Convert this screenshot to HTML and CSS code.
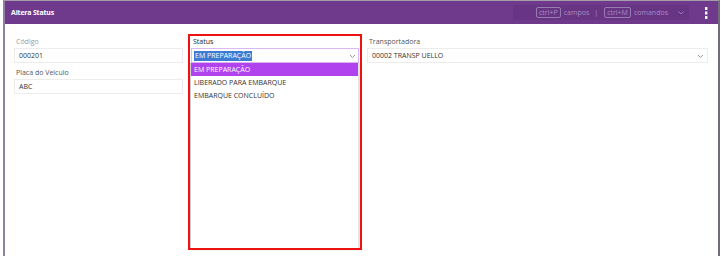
FILE: index.html
```html
<!DOCTYPE html>
<html lang="pt">
<head>
<meta charset="utf-8">
<link rel="stylesheet" href="styles.css">
</head>
<body>
<div class="window">
  <div class="header">
    <div class="title">Altera Status</div>
    <div class="tools">
      <div class="hints">
        <span class="kbd">ctrl+P</span><span class="hint">campos</span><span class="sep">|</span><span class="kbd">ctrl+M</span><span class="hint">comandos</span>
        <svg class="chev" width="8" height="6" viewBox="0 0 8 6"><path d="M1.5 1.5 L4 4 L6.5 1.5" fill="none" stroke="#9c7bb4" stroke-width="1"/></svg>
      </div>
      <svg class="kebab" width="4" height="12" viewBox="0 0 4 12"><rect x="1" y="0" width="2.4" height="3" fill="#fff"/><rect x="1" y="4.5" width="2.4" height="3" fill="#fff"/><rect x="1" y="9" width="2.4" height="3" fill="#fff"/></svg>
    </div>
  </div>
  <div class="form">
    <div class="col">
      <div class="field">
        <label class="lbl muted">Código</label>
        <div class="input">000201</div>
      </div>
      <div class="field">
        <label class="lbl">Placa do Veiculo</label>
        <div class="input">ABC</div>
      </div>
    </div>
    <div class="col status">
      <div class="field">
        <label class="lbl dark">Status</label>
        <div class="input select focus"><span class="sel">EM PREPARAÇÃO</span>
          <svg class="dd" width="7" height="5" viewBox="0 0 7 5"><path d="M1 1 L3.5 3.5 L6 1" fill="none" stroke="#999" stroke-width="1"/></svg>
        </div>
      </div>
      <ul class="options">
        <li class="opt active">EM PREPARAÇÃO</li>
        <li class="opt">LIBERADO PARA EMBARQUE</li>
        <li class="opt">EMBARQUE CONCLUÍDO</li>
      </ul>
      <div class="highlight"></div>
    </div>
    <div class="col">
      <div class="field">
        <label class="lbl">Transportadora</label>
        <div class="input select">00002 TRANSP UELLO
          <svg class="dd" width="7" height="5" viewBox="0 0 7 5"><path d="M1 1 L3.5 3.5 L6 1" fill="none" stroke="#999" stroke-width="1"/></svg>
        </div>
      </div>
    </div>
  </div>
</div>
</body>
</html>
```

FILE: styles.css
```css
* { box-sizing: border-box; }
html, body { margin: 0; padding: 0; background: #fff; }
body {
  font-family: "Open Sans", "Noto Sans", sans-serif;
  font-size: 7px;
  color: #333;
  width: 724px;
  height: 256px;
  overflow: hidden;
}
.window {
  margin-left: 3px;
  width: 717px;
  height: 256px;
  border-top: 1px solid #a49eaa;
  border-left: 2px solid #8f80a6;
  border-right: 2px solid #736a7c;
  background: #fff;
}
.header {
  height: 23px;
  background: #6f3a8c;
  display: flex;
  align-items: center;
  justify-content: space-between;
  padding: 0 10px 0 6px;
}
.title {
  color: #fff;
  font-weight: 700;
  font-size: 7px;
  letter-spacing: -0.2px;
}
.tools { display: flex; align-items: center; gap: 15px; }
.hints {
  display: flex;
  align-items: center;
  height: 15px;
  width: 176px;
  padding: 0 4px 0 23px;
  background: #683585;
  color: #a98ac0;
  font-size: 7px;
}
.kbd {
  border: 1px solid #9a7ab2;
  border-radius: 2px;
  padding: 0 2px;
  line-height: 9px;
}
.hint { margin-left: 3px; }
.sep { margin: 0 6px 0 5px; }
.chev { margin-left: auto; }
.kebab { display: block; }
.form {
  display: grid;
  grid-template-columns: 169px 168px 341px;
  column-gap: 8px;
  padding: 11px 0 0 9px;
}
.col { position: relative; }
.field { display: flex; flex-direction: column; }
.lbl {
  height: 13px;
  line-height: 13px;
  padding-left: 2px;
  color: #555;
}
.lbl.muted { color: #9a9a9a; }
.lbl.dark { color: #222; }
.input {
  height: 15px;
  border: 1px solid #ececec;
  padding: 0 4px;
  display: flex;
  align-items: center;
  color: #333;
  margin-bottom: 3px;
}
.select { position: relative; }
.dd { position: absolute; right: 3px; top: 5px; }
.input.focus { border-color: #dcb8f2; padding-left: 2px; }
.input.focus .dd { right: 2px; }
.sel {
  background: #3c7bd3;
  color: #fff;
  padding: 0 1px;
  line-height: 10px;
}
.options {
  position: absolute;
  left: -1px;
  top: 28px;
  width: 169px;
  height: 186px;
  margin: 0;
  padding: 0;
  list-style: none;
  background: #fff;
  border-left: 1px solid #cfcfcf;
  border-right: 1px solid #e2e2e2;
  box-shadow: 1px 1px 2px rgba(0,0,0,0.15);
}
.opt {
  height: 13px;
  line-height: 13px;
  padding-left: 3px;
  color: #333;
}
.opt.active { background: #b043ee; color: #fff; }
.highlight {
  position: absolute;
  left: -3px;
  top: -1px;
  width: 174px;
  height: 216px;
  border: 2px solid #ee1111;
  pointer-events: none;
}
```
